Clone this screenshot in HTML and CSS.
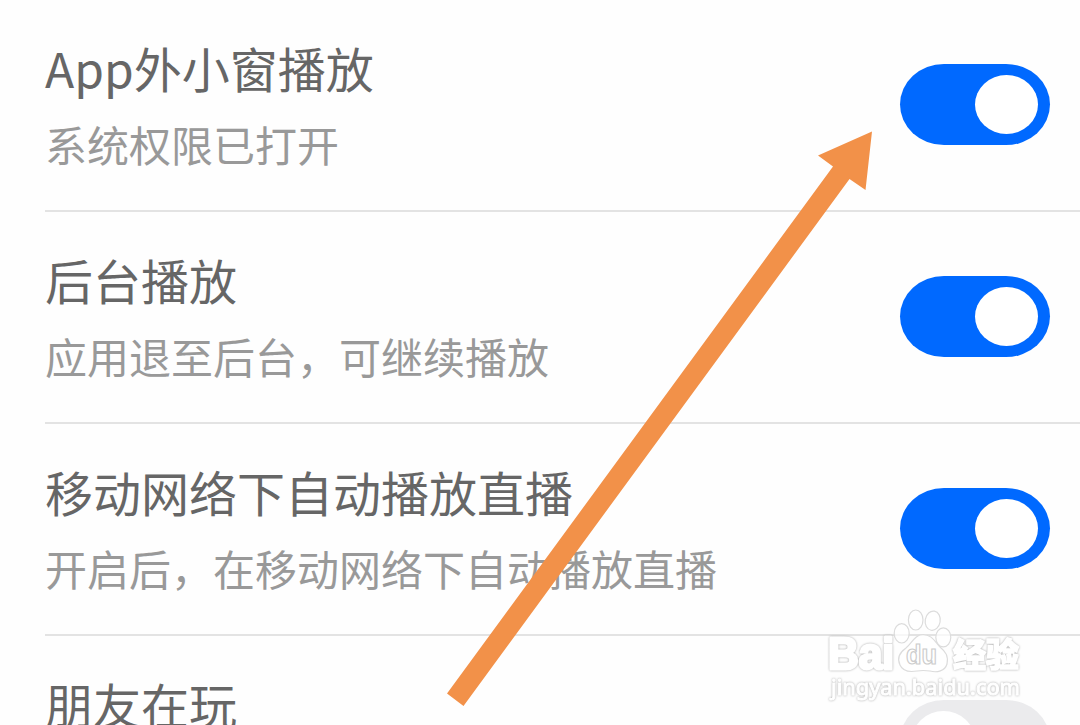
FILE: index.html
```
<!DOCTYPE html>
<html lang="zh-CN">
<head>
    <meta charset="UTF-8">
    <meta name="viewport" content="width=device-width, initial-scale=1.0">
    <title>播放设置</title>
    <link rel="stylesheet" href="styles.css">
</head>
<body>
    <div class="settings">
        <div class="row">
            <div class="info">
                <div class="title">App外小窗播放</div>
                <div class="desc">系统权限已打开</div>
            </div>
            <div class="switch on"><div class="knob"></div></div>
        </div>
        <div class="row">
            <div class="info">
                <div class="title">后台播放</div>
                <div class="desc">应用退至后台，可继续播放</div>
            </div>
            <div class="switch on"><div class="knob"></div></div>
        </div>
        <div class="row">
            <div class="info">
                <div class="title">移动网络下自动播放直播</div>
                <div class="desc">开启后，在移动网络下自动播放直播</div>
            </div>
            <div class="switch on"><div class="knob"></div></div>
        </div>
        <div class="row">
            <div class="info">
                <div class="title">朋友在玩</div>
            </div>
            <div class="switch"><div class="knob"></div></div>
        </div>

        <svg class="arrow" width="426" height="576" viewBox="0 0 426 576">
            <path d="M425 0.5L371 24.5L386 35.5L0 562.5L16.5 575L402.5 48L418.5 59Z" fill="#f29149"/>
        </svg>

        <svg class="watermark" width="200" height="100" viewBox="0 0 200 100">
            <g class="paw">
                <ellipse cx="72.700" cy="28.300" rx="7.500" ry="9.700"/>
                <ellipse cx="86.700" cy="15" rx="7.300" ry="10"/>
                <ellipse cx="103.700" cy="15.700" rx="7.500" ry="9.700" transform="rotate(10 103.700 15.700)"/>
                <ellipse cx="114.300" cy="32.300" rx="7.500" ry="9.500"/>
                <path d="M94 29.500C86 29.500 83 38 77 43C70 48 68 54 71 60C74 67 82 67 88 66Q94 65 101 66C108 68 116 66 118 59C119.500 51 117 47 111 42C106 37 103 29.500 94 29.500Z"/>
                <text class="du" x="77" y="59" textLength="31" lengthAdjust="spacingAndGlyphs">du</text>
            </g>
            <g class="outline">
                <text class="brand" x="-1" y="64" textLength="66" lengthAdjust="spacingAndGlyphs">Bai</text>
                <text class="cn" x="124" y="62">经验</text>
                <text class="url" x="2" y="90" textLength="189" lengthAdjust="spacingAndGlyphs">jingyan.baidu.com</text>
            </g>
        </svg>
    </div>
</body>
</html>
```
FILE: styles.css
```
body {
    margin: 0;
    background-color: #fefefe;
    font-family: 'Noto Sans CJK SC', sans-serif;
}
.settings {
    position: relative;
    height: 725px;
    overflow: hidden;
}
.row {
    display: flex;
    justify-content: space-between;
    box-sizing: border-box;
    height: 212px;
    margin-left: 45px;
    padding-right: 30px;
    border-bottom: 2px solid #e3e3e3;
}
.info {
    padding-top: 32px;
    white-space: nowrap;
}
.title {
    font-size: 48px;
    line-height: 70px;
    color: #666;
}
.desc {
    margin-top: 7px;
    font-size: 42px;
    line-height: 70px;
    color: #999;
}
.switch {
    display: flex;
    justify-content: flex-end;
    box-sizing: border-box;
    width: 150px;
    height: 81px;
    margin-top: 64px;
    padding: 11px 12px;
    border-radius: 44px / 40.5px;
    background-color: #ebebed;
}
.switch.on {
    background-color: #0069ff;
}
.knob {
    width: 63px;
    height: 59px;
    border-radius: 50%;
    background-color: #fff;
}
.switch:not(.on) {
    justify-content: flex-start;
}
.arrow {
    position: absolute;
    left: 447px;
    top: 131px;
}
.watermark {
    position: absolute;
    left: 829px;
    top: 605px;
    overflow: visible;
}
.paw {
    fill: rgba(255, 255, 255, 0.7);
    stroke: #dcdcdc;
    stroke-width: 1.2;
}
/* white letters, only their soft edge is visible on the page */
.outline {
    fill: #fff;
    stroke: #fff;
    stroke-width: 1.5;
    stroke-linejoin: round;
    filter: drop-shadow(0 0 0.9px #aaa);
}
.brand {
    font-family: 'Liberation Sans', sans-serif;
    font-size: 45px;
    font-weight: bold;
    stroke-width: 3;
}
.du {
    font-family: 'Liberation Sans', sans-serif;
    font-size: 27px;
    font-weight: bold;
    stroke: #ccc;
}
.cn {
    font-size: 33px;
    font-weight: 900;
}
.url {
    font-family: 'Noto Sans', sans-serif;
    font-size: 22px;
    stroke-width: 1;
}
```
